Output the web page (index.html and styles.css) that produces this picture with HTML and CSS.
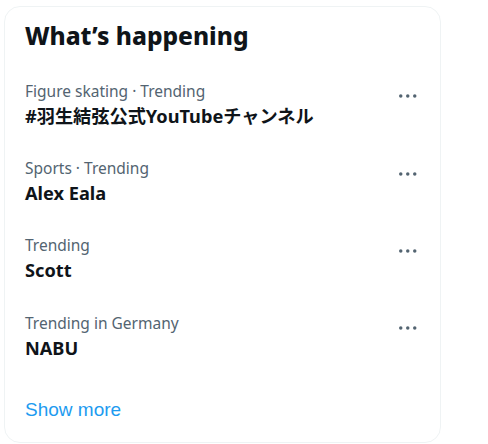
FILE: index.html
```html
<!DOCTYPE html>
<html lang="en">
<head>
    <meta charset="UTF-8">
    <meta name="viewport" content="width=device-width, initial-scale=1.0">
    <title>What's happening</title>
    <link rel="stylesheet" href="styles.css">
</head>
<body>

    <!-- Trends card -->
    <section class="trends">
        <h2 class="trends-title">What’s happening</h2>

        <div class="trend">
            <div class="trend-text">
                <div class="trend-meta">Figure skating · Trending</div>
                <div class="trend-name">#羽生結弦公式YouTubeチャンネル</div>
            </div>
            <svg class="trend-more" width="18" height="4" viewBox="0 0 18 4"><circle cx="1.75" cy="2" r="1.75"/><circle cx="8.75" cy="2" r="1.75"/><circle cx="15.75" cy="2" r="1.75"/></svg>
        </div>

        <div class="trend">
            <div class="trend-text">
                <div class="trend-meta">Sports · Trending</div>
                <div class="trend-name">Alex Eala</div>
            </div>
            <svg class="trend-more" width="18" height="4" viewBox="0 0 18 4"><circle cx="1.75" cy="2" r="1.75"/><circle cx="8.75" cy="2" r="1.75"/><circle cx="15.75" cy="2" r="1.75"/></svg>
        </div>

        <div class="trend">
            <div class="trend-text">
                <div class="trend-meta">Trending</div>
                <div class="trend-name">Scott</div>
            </div>
            <svg class="trend-more" width="18" height="4" viewBox="0 0 18 4"><circle cx="1.75" cy="2" r="1.75"/><circle cx="8.75" cy="2" r="1.75"/><circle cx="15.75" cy="2" r="1.75"/></svg>
        </div>

        <div class="trend">
            <div class="trend-text">
                <div class="trend-meta">Trending in Germany</div>
                <div class="trend-name">NABU</div>
            </div>
            <svg class="trend-more" width="18" height="4" viewBox="0 0 18 4"><circle cx="1.75" cy="2" r="1.75"/><circle cx="8.75" cy="2" r="1.75"/><circle cx="15.75" cy="2" r="1.75"/></svg>
        </div>

        <a class="show-more" href="#">Show more</a>
    </section>

</body>
</html>
```

FILE: styles.css
```css
body {
    margin: 0;
    background: #fff;
    font-family: "Noto Sans", "Noto Sans CJK JP", sans-serif;
    color: #0f1419;
}

.trends {
    box-sizing: border-box;
    width: 437px;
    height: 437px;
    margin: 6px 0 0 4px;
    padding: 14.5px 20px 0 20px;
    border: 1px solid #eff3f4;
    border-radius: 16px;
}

.trends-title {
    margin: 0 0 15px 0;
    font-size: 24.5px;
    line-height: 28px;
    font-weight: 800;
}

.trend {
    display: flex;
    justify-content: space-between;
    align-items: flex-start;
    padding: 16.2px 0 14.2px 0;
}

.trend-meta {
    font-size: 15.5px;
    line-height: 20px;
    color: #536471;
}

.trend-name {
    margin-top: 3px;
    font-size: 18.2px;
    line-height: 24px;
    font-weight: 700;
}

.trend-more {
    fill: #536471;
    margin: 13.5px 3px 0 0;
}

.show-more {
    display: block;
    margin-top: 24px;
    font-family: "Liberation Sans", Arial, sans-serif;
    font-size: 19px;
    line-height: 24px;
    color: #1d9bf0;
    text-decoration: none;
}
```
